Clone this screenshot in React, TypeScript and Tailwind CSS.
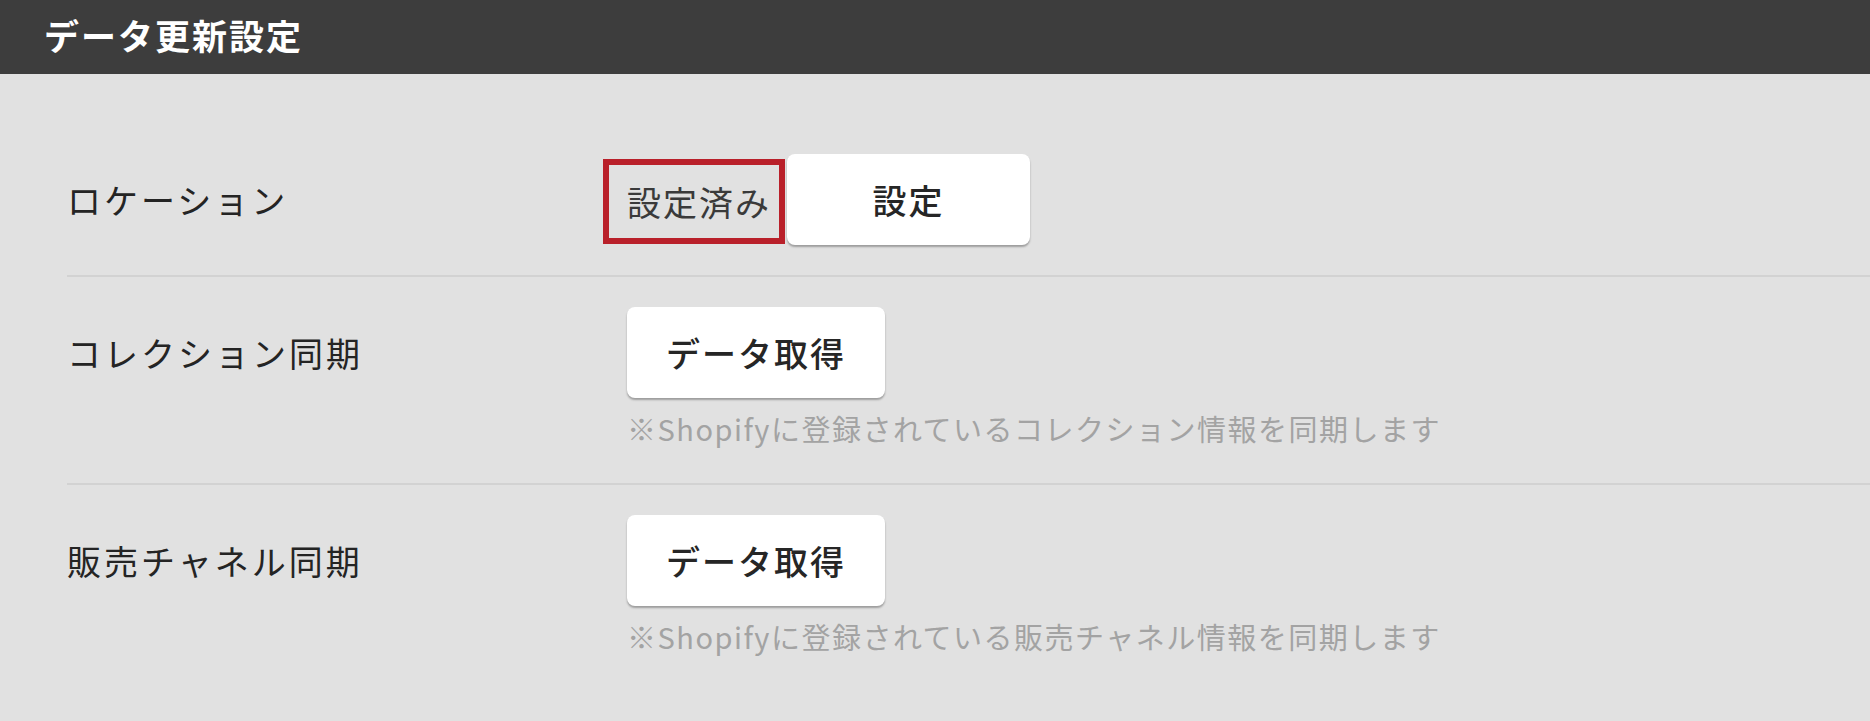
const rows = [
  {
    label: 'コレクション同期',
    hint: '※Shopifyに登録されているコレクション情報を同期します',
  },
  {
    label: '販売チャネル同期',
    hint: '※Shopifyに登録されている販売チャネル情報を同期します',
  },
]

function Label({ children }: { children: string }) {
  return (
    <div className="h-[91px] flex items-center text-[34px] tracking-[3px] text-[#242424]">
      {children}
    </div>
  )
}

export default function App() {
  return (
    <div className="min-h-[721px] bg-[#e1e1e1] font-['Noto_Sans_CJK_JP',sans-serif]">
      <header className="h-[74px] bg-[#3d3d3d] flex items-center pl-[44px] pb-[3px]">
        <h1 className="text-[35px] font-bold text-white tracking-[2px]">データ更新設定</h1>
      </header>

      <main className="ml-[67px] pt-[50px]">
        <div className="grid grid-cols-[560px_1fr] py-[30px] border-b-2 border-[#d2d2d2]">
          <Label>ロケーション</Label>
          <div className="flex items-center">
            <span className="-ml-[24px] border-[6px] border-[#b9202a] pl-[18px] pr-[8px] h-[85px] flex items-center text-[34px] tracking-[2px] text-[#3a3a3a] mt-[3px]">
              設定済み
            </span>
            <button className="ml-[2px] w-[243px] h-[91px] bg-white rounded-lg shadow-[0_2px_2px_rgba(0,0,0,0.3)] text-[34px] font-medium tracking-[2px] text-[#262626]">
              設定
            </button>
          </div>
        </div>

        {rows.map((row, i) => (
          <div
            key={row.label}
            className={
              i === 0
                ? 'grid grid-cols-[560px_1fr] pt-[30px] pb-[33px] border-b-2 border-[#d2d2d2]'
                : 'grid grid-cols-[560px_1fr] pt-[30px] pb-[33px]'
            }
          >
            <Label>{row.label}</Label>
            <div className="flex flex-col items-start">
              <button className="w-[258px] h-[91px] bg-white rounded-lg shadow-[0_2px_2px_rgba(0,0,0,0.3)] text-[34px] font-medium tracking-[2px] text-[#262626]">
                データ取得
              </button>
              <p className="mt-[9px] text-[29px] leading-[43px] tracking-[1.5px] text-[#a3a3a3]">{row.hint}</p>
            </div>
          </div>
        ))}
      </main>
    </div>
  )
}
